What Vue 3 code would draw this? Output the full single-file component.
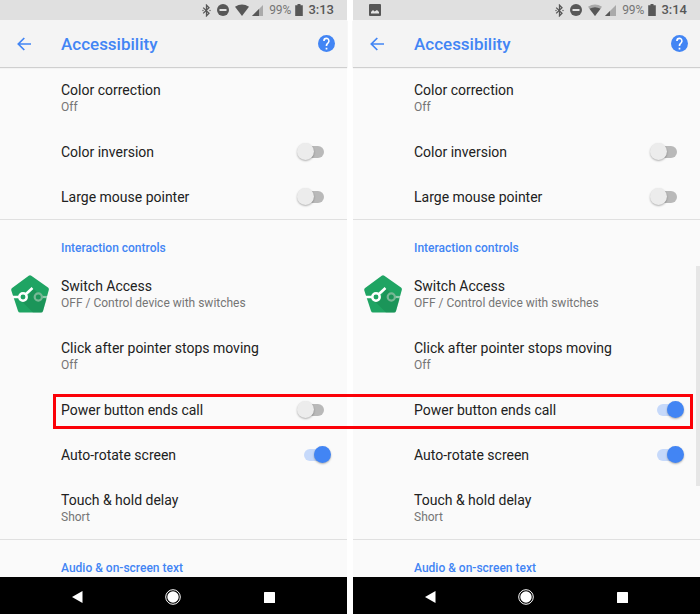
<template>
  <main class="compare">
    <section v-for="phone in phones" :key="phone.id" class="phone">
      <!-- status bar -->
      <div class="status-bar">
        <svg v-if="phone.screenshot" class="shot" viewBox="0 0 12 12" width="12" height="12">
          <rect x="0" y="0" width="12" height="12" rx="1" fill="#575757" />
          <path d="M2 9.5V8l2-2 1.6 1.5L8 6l2 2v1.500z" fill="#e6e6e6" />
        </svg>
        <div class="status-icons">
          <svg viewBox="0 0 9 13" width="9" height="13">
            <path d="M1.200 3.600 7 9.200 4.500 11.800V1.200L7 3.800 1.200 9.400" fill="none" stroke="#575757" stroke-width="1.300" />
            <circle cx="1" cy="6.500" r="0.700" fill="#575757" />
            <circle cx="8" cy="6.500" r="0.700" fill="#575757" />
          </svg>
          <svg class="dnd" viewBox="0 0 12 12" width="12" height="12">
            <circle cx="6" cy="6" r="6" fill="#575757" />
            <rect x="2.500" y="5" width="7" height="2" fill="#e0e0e0" />
          </svg>
          <svg class="wifi" viewBox="0 0 14 12" width="14" height="12">
            <path d="M0 2.800Q7-2 14 2.800L7 12z" :fill="phone.weakWifi ? '#aaa' : '#575757'" />
            <path v-if="phone.weakWifi" d="M1.500 4.800Q7 1.800 12.500 4.800L7 12z" fill="#575757" />
          </svg>
          <svg class="signal" viewBox="0 0 11 11" width="11" height="11">
            <path d="M11 0V11H0z" fill="#aaa" />
            <path :d="phone.weakWifi ? 'M5 6V11H0z' : 'M7 4V11H0z'" fill="#575757" />
          </svg>
          <span class="percent">99%</span>
          <svg class="battery" viewBox="0 0 8 12" width="8" height="12">
            <path d="M2.500 0h3v1.300H7.800V12H.2V1.300h2.300z" fill="#575757" />
          </svg>
          <span class="clock">{{ phone.time }}</span>
        </div>
      </div>

      <!-- toolbar -->
      <header class="toolbar">
        <button class="icon-btn back" aria-label="Back">
          <svg viewBox="0 0 14 14" width="14" height="14">
            <path d="M14 7H1.500M7.300 1 1.300 7l6 6" fill="none" stroke="#4285f4" stroke-width="1.700" />
          </svg>
        </button>
        <h1>Accessibility</h1>
        <button class="icon-btn" aria-label="Help">
          <svg viewBox="2 2 20 20" width="17" height="17">
            <circle cx="12" cy="12" r="10" fill="#4285f4" />
            <path d="M12 5a4 4 0 0 0-4 4h2a2 2 0 1 1 3.400 1.400l-1.230 1.270A4 4 0 0 0 11 14.500v.5h2c0-1.500.450-2.100 1.170-2.830l.9-.920A4 4 0 0 0 12 5zM11 17h2v2h-2z" fill="#fff" />
          </svg>
        </button>
      </header>

      <div class="list">
        <section v-for="(group, g) in groups" :key="g" class="group">
          <h2 v-if="group.title">{{ group.title }}</h2>
          <template v-for="item in group.items" :key="item.id">
            <label v-if="item.toggle" class="row" :for="`${phone.id}-${item.id}`">
              <span class="name">{{ item.name }}</span>
              <input
                :id="`${phone.id}-${item.id}`"
                v-model="phone.toggles[item.id]"
                class="switch"
                type="checkbox"
                role="switch"
              />
            </label>
            <button v-else class="row tall">
              <svg v-if="item.id === 'switch'" class="app-icon" viewBox="0 0 38 38" width="38" height="38">
                <path d="M17.700.8q1.300-.9 2.600 0L37 12.600q1.200.9.800 2.300L32 36q-.5 1.500-2 1.500H9q-1.500 0-2-1.500L.3 15.500q-.4-1.500.8-2.400z" fill="#1fa463" />
                <path d="m15.500 25 6.500-11.500 13.500 11L32 36q-.5 1.500-2 1.500H22L9.500 25z" fill="#17804c" opacity="0.400" />
                <path d="M31 22h5" stroke="#8fcbac" stroke-width="2.200" />
                <circle cx="27.300" cy="22" r="3.600" fill="none" stroke="#77b895" stroke-width="2.200" />
                <path d="M1.500 22h7M15 19l6.500-6" stroke="#fff" stroke-width="2.600" />
                <circle cx="12" cy="22" r="3.700" fill="none" stroke="#fff" stroke-width="2.500" />
              </svg>
              <span class="texts">
                <span class="name">{{ item.name }}</span>
                <span class="summary">{{ item.summary }}</span>
              </span>
            </button>
          </template>
        </section>
        <div v-if="phone.scrolling" class="scrollbar"></div>
      </div>

      <!-- navigation bar -->
      <nav class="nav-bar">
        <button aria-label="Back">
          <svg viewBox="0 0 11 12" width="11" height="12"><path d="M0 6 10.500 0V12z" fill="#fff" /></svg>
        </button>
        <button aria-label="Home">
          <svg viewBox="0 0 16 16" width="16" height="16">
            <circle cx="8" cy="8" r="7.300" fill="none" stroke="#fff" stroke-width="1" />
            <circle cx="8" cy="8" r="5.700" fill="#fff" />
          </svg>
        </button>
        <button aria-label="Recents">
          <svg viewBox="0 0 11 11" width="11" height="11"><rect width="11" height="11" rx="0.500" fill="#fff" /></svg>
        </button>
      </nav>
    </section>

    <div class="highlight"></div>
  </main>
</template>

<script setup>
import { reactive } from 'vue'

const phones = reactive([
  {
    id: 'before',
    time: '3:13',
    screenshot: false,
    weakWifi: false,
    scrolling: false,
    toggles: { inversion: false, pointer: false, power: false, rotate: true },
  },
  {
    id: 'after',
    time: '3:14',
    screenshot: true,
    weakWifi: true,
    scrolling: true,
    toggles: { inversion: false, pointer: false, power: true, rotate: true },
  },
])

const groups = [
  {
    items: [
      { id: 'correction', name: 'Color correction', summary: 'Off' },
      { id: 'inversion', name: 'Color inversion', toggle: true },
      { id: 'pointer', name: 'Large mouse pointer', toggle: true },
    ],
  },
  {
    title: 'Interaction controls',
    items: [
      { id: 'switch', name: 'Switch Access', summary: 'OFF / Control device with switches' },
      { id: 'click', name: 'Click after pointer stops moving', summary: 'Off' },
      { id: 'power', name: 'Power button ends call', toggle: true },
      { id: 'rotate', name: 'Auto-rotate screen', toggle: true },
      { id: 'delay', name: 'Touch & hold delay', summary: 'Short' },
    ],
  },
  { title: 'Audio & on-screen text', items: [] },
]
</script>

<style>
body {
  margin: 0;
  background: #fff;
}
</style>

<style scoped>
.compare {
  position: relative;
  display: grid;
  grid-template-columns: 1fr 1fr;
  gap: 6px;
  min-height: 100vh;
  font-family: Roboto, sans-serif;
}

.phone {
  display: flex;
  flex-direction: column;
  min-width: 0;
  background: #fafafa;
}

svg { display: block; flex-shrink: 0; }

button {
  padding: 0;
  border: none;
  background: none;
  font-family: inherit;
  text-align: left;
  cursor: pointer;
}

/* status bar */
.status-bar {
  display: flex;
  align-items: center;
  height: 20px;
  padding: 0 13px 0 16px;
  background: #e0e0e0;
}

.status-icons {
  display: flex;
  align-items: center;
  margin-left: auto;
  font-size: 13px;
  line-height: 20px;
  color: #575757;
}

.dnd { margin-left: 6px; }
.wifi { margin-left: 6px; }
.signal { margin-left: 3px; }
.percent { margin-left: 6px; font-size: 12px; color: #757575; }
.battery { margin: 0 5px 0 4px; }
.clock { font-weight: 500; }

/* toolbar */
.toolbar {
  display: flex;
  align-items: center;
  height: 47px;
  padding: 0 12px 0 17px;
  background: #f4f4f4;
  box-shadow: 0 1px 1px #cfcfcf;
  z-index: 1;
}

.back { width: 44px; }

h1 {
  flex: 1;
  margin: 0;
  font-size: 17px;
  font-weight: 500;
  line-height: 20px;
  color: #4285f4;
}

/* settings list */
.list {
  position: relative;
  flex: 1;
}

.group + .group { border-top: 1px solid #e0e0e0; }

h2 {
  margin: 0;
  padding: 20px 16px 7px 61px;
  font-size: 12px;
  font-weight: 500;
  line-height: 16px;
  color: #4285f4;
}

.group:last-of-type h2 { padding-bottom: 0; }

.row {
  display: flex;
  align-items: center;
  box-sizing: border-box;
  width: 100%;
  height: 45px;
  padding: 0 16px 0 61px;
  cursor: pointer;
}

.row.tall { height: 62px; }
.row .switch { margin-left: auto; }

.app-icon {
  margin-left: -50px;
  margin-right: 12px;
}

.texts { display: flex; flex-direction: column; }

.name {
  font-size: 14px;
  line-height: 18px;
  color: #212121;
}

.summary {
  font-size: 12px;
  line-height: 16px;
  color: #757575;
}

.switch {
  appearance: none;
  position: relative;
  flex-shrink: 0;
  width: 34px;
  height: 18px;
  margin: 0;
  cursor: pointer;
}

.switch::before {
  content: '';
  position: absolute;
  top: 3px;
  left: 7px;
  width: 20px;
  height: 12px;
  border-radius: 6px;
  background: #b9b9b9;
}

.switch::after {
  content: '';
  position: absolute;
  top: 0;
  left: 0;
  width: 17px;
  height: 17px;
  border-radius: 50%;
  background: #ececec;
  box-shadow: 0 1px 2px rgba(0, 0, 0, 0.3);
}

.switch:checked::before { background: #c6d9fa; }
.switch:checked::after { left: 17px; background: #4285f4; }

.scrollbar {
  position: absolute;
  top: 199px;
  right: 0;
  width: 4px;
  height: 220px;
  background: #e6e6e6;
}

/* navigation bar */
.nav-bar {
  display: grid;
  grid-template-columns: repeat(3, 1fr);
  height: 37px;
  padding: 0 30px;
  background: #000;
}

.nav-bar button {
  display: flex;
  align-items: center;
  justify-content: center;
}

.nav-bar svg { margin-top: 3px; }

/* frame around the setting that differs */
.highlight {
  position: absolute;
  top: 394px;
  left: 53px;
  right: 7px;
  box-sizing: border-box;
  height: 35px;
  border: 3px solid #fb0007;
  pointer-events: none;
}
</style>
